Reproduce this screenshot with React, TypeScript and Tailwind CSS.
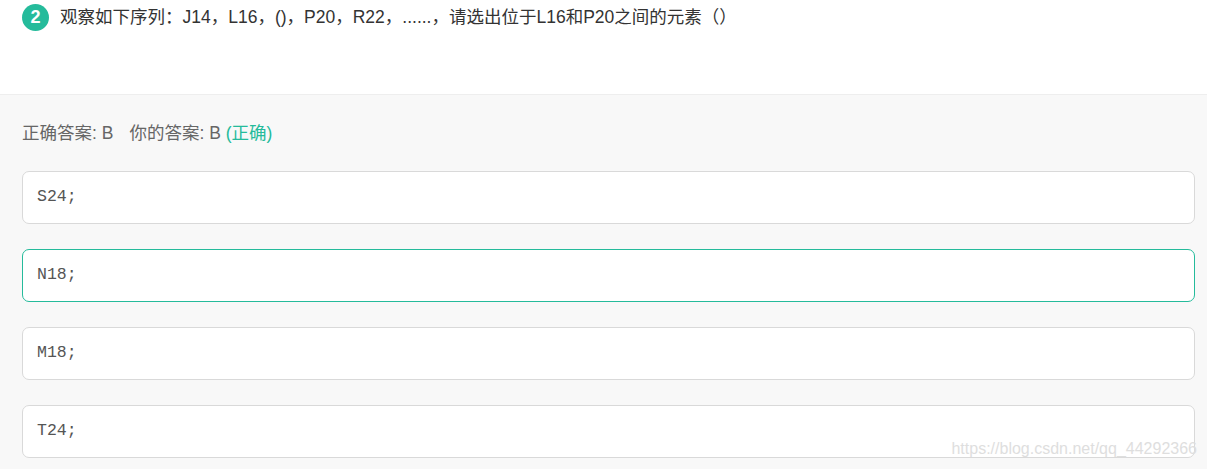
const options = [
  { text: 'S24;', picked: false },
  { text: 'N18;', picked: true },
  { text: 'M18;', picked: false },
  { text: 'T24;', picked: false },
]

export default function App() {
  return (
    <div className="relative w-[1207px] h-[469px] overflow-hidden bg-[#f8f8f8] font-['Liberation_Sans','Noto_Sans_CJK_SC',sans-serif]">
      {/* 题目 */}
      <div className="h-[95px] bg-white border-b border-[#eeeeee] pl-[22px] pt-[4px]">
        <div className="flex items-center gap-[11px]">
          <span className="w-[27px] h-[27px] shrink-0 rounded-full bg-[#25bb9b] text-white text-[18px] font-bold flex items-center justify-center">
            2
          </span>
          <span className="text-[17.5px] text-[#333333]">
            观察如下序列：J14，L16，()，P20，R22，......，请选出位于L16和P20之间的元素（）
          </span>
        </div>
      </div>

      {/* 答案 */}
      <div className="pl-[22px] pr-[12px]">
        <div className="pt-[25px] h-[76px] text-[17.5px] text-[#666666]">
          正确答案: B<span className="ml-[16px]">你的答案: B</span>{' '}
          <span className="text-[#25bb9b]">(正确)</span>
        </div>
        <div className="flex flex-col gap-[25px]">
          {options.map((o) => (
            <div
              key={o.text}
              className={`h-[53px] rounded-[7px] bg-white border flex items-center pl-[14px] font-['Liberation_Mono',monospace] text-[16.5px] text-[#555555] ${
                o.picked ? 'border-[#25bb9b]' : 'border-[#d9d9d9]'
              }`}
            >
              {o.text}
            </div>
          ))}
        </div>
      </div>

      {/* 水印 */}
      <div className="absolute right-[10px] top-[440px] text-[16px] leading-[18px] text-[#dedede] font-['Liberation_Sans',sans-serif]">
        https://blog.csdn.net/qq_44292366
      </div>
    </div>
  )
}
